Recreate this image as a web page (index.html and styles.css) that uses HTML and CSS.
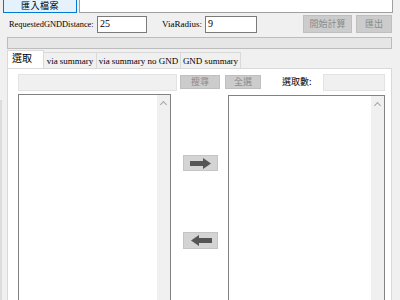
FILE: index.html
```html
<!DOCTYPE html>
<html>
<head>
<meta charset="utf-8">
<link rel="stylesheet" href="styles.css">
</head>
<body>
<div class="win">
  <div class="row1">
    <div class="btn-import">匯入檔案</div>
    <div class="pathbox"></div>
  </div>
  <div class="row2">
    <span class="lbl lbl-dist">RequestedGNDDistance:</span>
    <div class="tb tb-dist">25</div>
    <span class="lbl lbl-via">ViaRadius:</span>
    <div class="tb tb-via">9</div>
    <div class="btn-dis btn-start">開始計算</div>
    <div class="btn-dis btn-export">匯出</div>
  </div>
  <div class="progress"></div>
  <div class="tabs">
    <div class="tab sel">選取</div>
    <div class="tab t2">via summary</div>
    <div class="tab t3">via summary no GND</div>
    <div class="tab t4">GND summary</div>
  </div>
  <div class="panel">
    <div class="toolbar">
      <div class="search"></div>
      <div class="btn-dis btn-search">搜尋</div>
      <div class="btn-dis btn-all">全選</div>
      <span class="count-lbl">選取數:</span>
      <div class="count"></div>
    </div>
    <div class="lists">
      <div class="listbox left"><div class="sb"><span class="chev"></span></div></div>
      <div class="mid">
        <div class="arrow-btn to-right">
          <svg width="22" height="11" viewBox="0 0 22 11"><path d="M0 3H13V0L21 5.5 13 11V8H0Z" fill="#555"/></svg>
        </div>
        <div class="arrow-btn to-left">
          <svg width="22" height="11" viewBox="0 0 22 11"><path d="M22 3H9V0L1 5.5 9 11V8H22Z" fill="#555"/></svg>
        </div>
      </div>
      <div class="listbox right"><div class="sb"><span class="chev"></span></div></div>
    </div>
  </div>
  <div class="edge"></div>
</div>
</body>
</html>
```

FILE: styles.css
```css
html, body {
  margin: 0;
  padding: 0;
  background: #f0f0f0;
  width: 400px;
  height: 300px;
  overflow: hidden;
}
.win {
  position: relative;
  width: 400px;
  height: 300px;
  font-family: "Liberation Serif", "Noto Sans CJK TC", serif;
  font-size: 9px;
  color: #000;
}
.row1 {
  display: flex;
  height: 13px;
  padding-left: 3px;
}
.btn-import {
  width: 72px;
  height: 12px;
  border: 1px solid #0078d7;
  border-top: none;
  background: #e5f1fb;
  font-family: "Noto Sans CJK TC", sans-serif;
  font-size: 9px;
  font-weight: 400;
  line-height: 12px;
  text-align: center;
  letter-spacing: 0.5px;
}
.pathbox {
  margin-left: 2px;
  width: 312px;
  height: 12px;
  background: #fff;
  border: 1px solid #a0a0a0;
  border-top: none;
}
.row2 {
  display: flex;
  align-items: center;
  height: 18px;
  margin-top: 2px;
  padding-left: 9px;
}
.lbl {
  display: block;
  white-space: nowrap;
}
.lbl-dist { width: 88px; font-size: 8.4px; }
.lbl-via { width: 43px; margin-left: 15px; }
.tb {
  box-sizing: border-box;
  height: 17px;
  background: #fff;
  border: 1px solid #7a7a7a;
  padding-left: 2px;
  font-size: 10px;
  line-height: 14px;
}
.tb-dist { width: 50px; }
.tb-via { width: 52px; }
.btn-dis {
  box-sizing: border-box;
  background: #cccccc;
  border: 1px solid #bfbfbf;
  color: #8a8a8a;
  font-family: "Noto Sans CJK TC", sans-serif;
  font-size: 9px;
  text-align: center;
}
.btn-start {
  width: 49px;
  height: 18px;
  line-height: 16px;
  margin-left: 46px;
}
.btn-export {
  width: 36px;
  height: 18px;
  line-height: 16px;
  margin-left: 4px;
}
.progress {
  box-sizing: border-box;
  margin: 4px 0 0 7px;
  width: 385px;
  height: 12px;
  background: #e6e6e6;
  border: 1px solid #bcbcbc;
}
.tabs {
  display: flex;
  align-items: flex-end;
  height: 18px;
  margin: 1px 0 0 7px;
}
.tab {
  box-sizing: border-box;
  height: 16px;
  border: 1px solid #d9d9d9;
  border-bottom: none;
  border-left: none;
  background: #f0f0f0;
  line-height: 15px;
  padding-top: 1px;
  text-align: center;
  white-space: nowrap;
}
.tab.sel {
  width: 37px;
  height: 18px;
  background: #fff;
  border-left: 1px solid #d9d9d9;
  font-family: "Noto Sans CJK TC", sans-serif;
  font-size: 10px;
  font-weight: 400;
  text-align: left;
  padding-left: 4px;
  line-height: 13px;
  padding-top: 0;
}
.t2 { width: 53px; }
.t3 { width: 84px; }
.t4 { width: 60px; }
.panel {
  box-sizing: border-box;
  margin-left: 7px;
  width: 385px;
  height: 240px;
  background: #fff;
  border: 1px solid #d9d9d9;
  padding: 5px 0 0 10px;
}
.toolbar {
  display: flex;
  align-items: flex-start;
  height: 20px;
}
.search {
  box-sizing: border-box;
  width: 159px;
  height: 17px;
  background: #f0f0f0;
  border: 1px solid #e3e3e3;
}
.btn-search {
  width: 40px;
  height: 14px;
  line-height: 12px;
  margin: 1px 0 0 3px;
}
.btn-all {
  width: 36px;
  height: 14px;
  line-height: 12px;
  margin: 1px 0 0 5px;
}
.count-lbl {
  margin: 1px 0 0 21px;
  width: 41px;
  font-family: "Noto Sans CJK TC", sans-serif;
  font-size: 9px;
  font-weight: 400;
  line-height: 13px;
}
.count {
  box-sizing: border-box;
  width: 62px;
  height: 17px;
  background: #f0f0f0;
  border: 1px solid #e3e3e3;
}
.lists {
  display: flex;
  align-items: flex-start;
}
.listbox {
  box-sizing: border-box;
  height: 220px;
  background: #fff;
  border: 1px solid #828282;
  display: flex;
  justify-content: flex-end;
}
.listbox.left { width: 153px; }
.listbox.right { width: 157px; margin-top: 1px; }
.sb {
  width: 13px;
  height: 100%;
  background: #f0f0f0;
  display: flex;
  justify-content: center;
}
.chev {
  width: 4px;
  height: 4px;
  margin-top: 7px;
  border-left: 1px solid #a6a6a6;
  border-top: 1px solid #a6a6a6;
  transform: rotate(45deg);
}
.mid {
  width: 57px;
  display: flex;
  flex-direction: column;
  padding-left: 12px;
  box-sizing: border-box;
}
.arrow-btn {
  box-sizing: border-box;
  width: 35px;
  height: 16px;
  background: #d4d4d4;
  border: 1px solid #c4c4c4;
  display: flex;
  align-items: center;
  justify-content: center;
}
.arrow-btn svg { display: block; }
.to-right { margin-top: 61px; }
.to-left { margin-top: 61px; height: 17px; }
.edge {
  position: absolute;
  left: 0;
  top: 100px;
  width: 2px;
  height: 200px;
  background: #dcdcdc;
}
```
